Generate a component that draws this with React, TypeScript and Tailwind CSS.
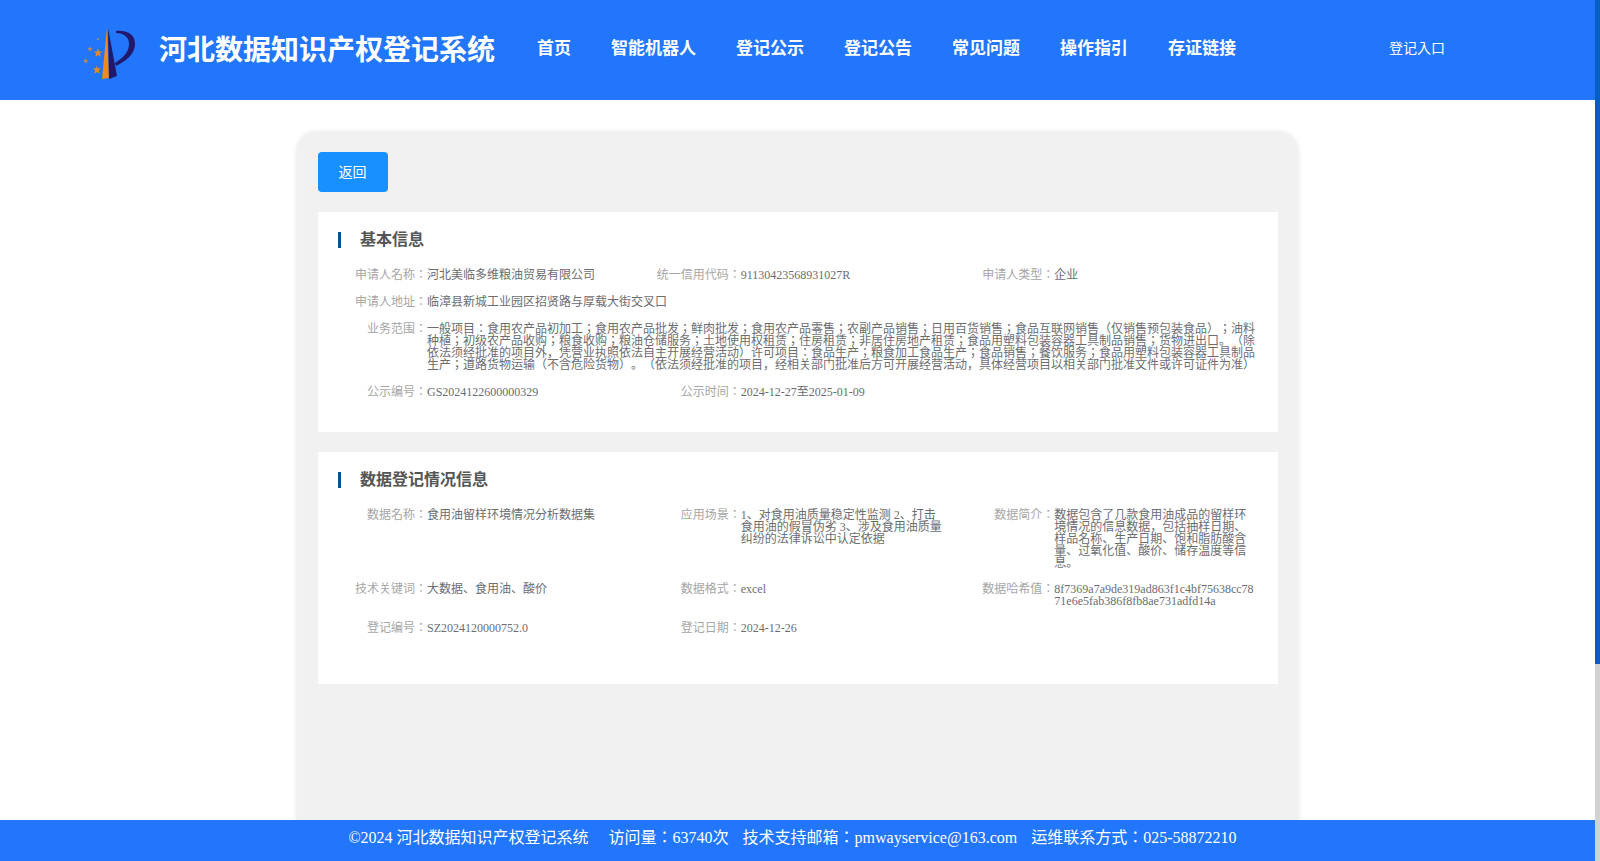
import React from "react";

const navItems = ["首页", "智能机器人", "登记公示", "登记公告", "常见问题", "操作指引", "存证链接"];

const Field = ({
  label,
  children,
  full,
  className,
}: {
  label: string;
  children: React.ReactNode;
  full?: boolean;
  className?: string;
}) => (
  <div className={`flex text-[12px] leading-[12px] ${full ? "col-span-3" : ""} ${className ?? ""}`}>
    <div className="w-[89px] shrink-0 text-right text-[#a6a6a6]">{label}：</div>
    <div className={`text-[#6b6d71] ${full ? "w-[830px]" : "w-[202px]"}`}>{children}</div>
  </div>
);

const starPoints = (cx: number, cy: number, r: number) =>
  Array.from({ length: 10 }, (_, i) => {
    const a = (Math.PI / 5) * i - Math.PI / 2;
    const d = i % 2 === 0 ? r : r * 0.42;
    return `${cx + d * Math.cos(a)},${cy + d * Math.sin(a)}`;
  }).join(" ");

const Logo = () => (
  <svg width="54" height="54" viewBox="0 0 54 54" className="shrink-0">
    <path d="M24 1 L26 52 L19 53 Z" fill="#ee8a1e" />
    <path d="M25 2 L34 50 L26 53 Z" fill="#22186b" />
    <path d="M33 5 C45 4 52 9 52 18 C52 28 43 35 33 40 L32 37 C40 32 46 26 46 18 C46 11 41 7 33 7 Z" fill="#22186b" />
    <polygon points={starPoints(15, 27, 4.500)} fill="#e08a2a" />
    <polygon points={starPoints(14, 44, 4.500)} fill="#e08a2a" />
    <polygon points={starPoints(7, 23, 2.800)} fill="#c9884a" />
    <polygon points={starPoints(2.800, 35, 2.800)} fill="#c9884a" />
    <polygon points={starPoints(15, 13, 1.800)} fill="#a89070" />
  </svg>
);

export default function App() {
  return (
    <div className="relative h-[861px] w-[1600px] overflow-hidden bg-white font-['Liberation_Serif','Noto_Sans_CJK_JP',serif] [text-spacing-trim:space-all]">
      {/* scrollbar */}
      <div className="absolute right-0 top-0 h-full w-[5px] bg-[#d2d2d2]">
        <div className="h-[664px] w-full bg-[#055fc4]" />
      </div>

      <div className="w-[1595px]">
        {/* header */}
        <div className="flex h-[100px] items-center bg-[#2176fb] text-white">
          <div className="ml-[83px] mt-[6px]">
            <Logo />
          </div>
          <div className="ml-[22px] mt-[2px] text-[28px] font-bold leading-none whitespace-nowrap">河北数据知识产权登记系统</div>
          <div className="ml-[42px] -mt-[2px] flex gap-[40px] text-[17px] font-bold">
            {navItems.map((item) => (
              <span key={item} className="whitespace-nowrap">
                {item}
              </span>
            ))}
          </div>
          <div className="ml-[153px] -mt-[4px] text-[14px]">登记入口</div>
        </div>

        {/* card */}
        <div className="mx-auto mt-[32px] h-[760px] w-[1001px] rounded-[20px] bg-[#f1f1f1] px-[21px] pt-[20px] shadow-[0_0_5px_rgba(0,0,0,0.12)]">
          <button className="h-[40px] w-[70px] rounded-[4px] bg-[#1890ff] pr-[1px] text-[14px] text-white">返回</button>

          <div className="mt-[20px] h-[220px] w-[960px] bg-white pl-[20px] pt-[20px]">
            <div className="flex h-[16px] items-center">
              <div className="h-[16px] w-[3px] bg-[#005293]" />
              <div className="ml-[19px] text-[16px] font-bold text-[#555]">基本信息</div>
            </div>
            <div className="mt-[21px] grid w-[941px] grid-cols-3 gap-y-[15px]">
              <Field label="申请人名称">河北美临多维粮油贸易有限公司</Field>
              <Field label="统一信用代码">91130423568931027R</Field>
              <Field label="申请人类型">企业</Field>
              <Field label="申请人地址" full>
                临漳县新城工业园区招贤路与厚载大街交叉口
              </Field>
              <Field label="业务范围" full>
                一般项目：食用农产品初加工；食用农产品批发；鲜肉批发；食用农产品零售；农副产品销售；日用百货销售；食品互联网销售（仅销售预包装食品）；油料种植；初级农产品收购；粮食收购；粮油仓储服务；土地使用权租赁；住房租赁；非居住房地产租赁；食品用塑料包装容器工具制品销售；货物进出口。（除依法须经批准的项目外，凭营业执照依法自主开展经营活动）许可项目：食品生产；粮食加工食品生产；食品销售；餐饮服务；食品用塑料包装容器工具制品生产；道路货物运输（不含危险货物）。（依法须经批准的项目，经相关部门批准后方可开展经营活动，具体经营项目以相关部门批准文件或许可证件为准）
              </Field>
              <Field label="公示编号">GS2024122600000329</Field>
              <Field label="公示时间" className="col-span-2">
                2024-12-27至2025-01-09
              </Field>
            </div>
          </div>

          <div className="mt-[20px] h-[232px] w-[960px] bg-white pl-[20px] pt-[20px]">
            <div className="flex h-[16px] items-center">
              <div className="h-[16px] w-[3px] bg-[#005293]" />
              <div className="ml-[19px] text-[16px] font-bold text-[#555]">数据登记情况信息</div>
            </div>
            <div className="mt-[21px] grid w-[941px] grid-cols-3 gap-y-[15px]">
              <Field label="数据名称">食用油留样环境情况分析数据集</Field>
              <Field label="应用场景">1、对食用油质量稳定性监测 2、打击食用油的假冒伪劣 3、涉及食用油质量纠纷的法律诉讼中认定依据</Field>
              <Field label="数据简介" className="-mb-[1px]">数据包含了几款食用油成品的留样环境情况的信息数据，包括抽样日期、样品名称、生产日期、饱和脂肪酸含量、过氧化值、酸价、储存温度等信息。</Field>
              <Field label="技术关键词">大数据、食用油、酸价</Field>
              <Field label="数据格式">excel</Field>
              <Field label="数据哈希值">
                <span className="break-all">8f7369a7a9de319ad863f1c4bf75638cc7871e6e5fab386f8fb8ae731adfd14a</span>
              </Field>
              <Field label="登记编号">SZ2024120000752.0</Field>
              <Field label="登记日期" className="col-span-2">
                2024-12-26
              </Field>
            </div>
          </div>
        </div>
      </div>

      {/* footer */}
      <div className="absolute bottom-0 left-0 flex h-[41px] w-[1595px] justify-center bg-[#2176fb] pr-[10px] pt-[5px] text-[16px] leading-[26px] text-white whitespace-pre">
        <span>©2024 河北数据知识产权登记系统</span>
        <span className="ml-[20px]">访问量：63740次</span>
        <span className="ml-[14px]">技术支持邮箱：pmwayservice@163.com</span>
        <span className="ml-[14px]">运维联系方式：025-58872210</span>
      </div>
    </div>
  );
}
